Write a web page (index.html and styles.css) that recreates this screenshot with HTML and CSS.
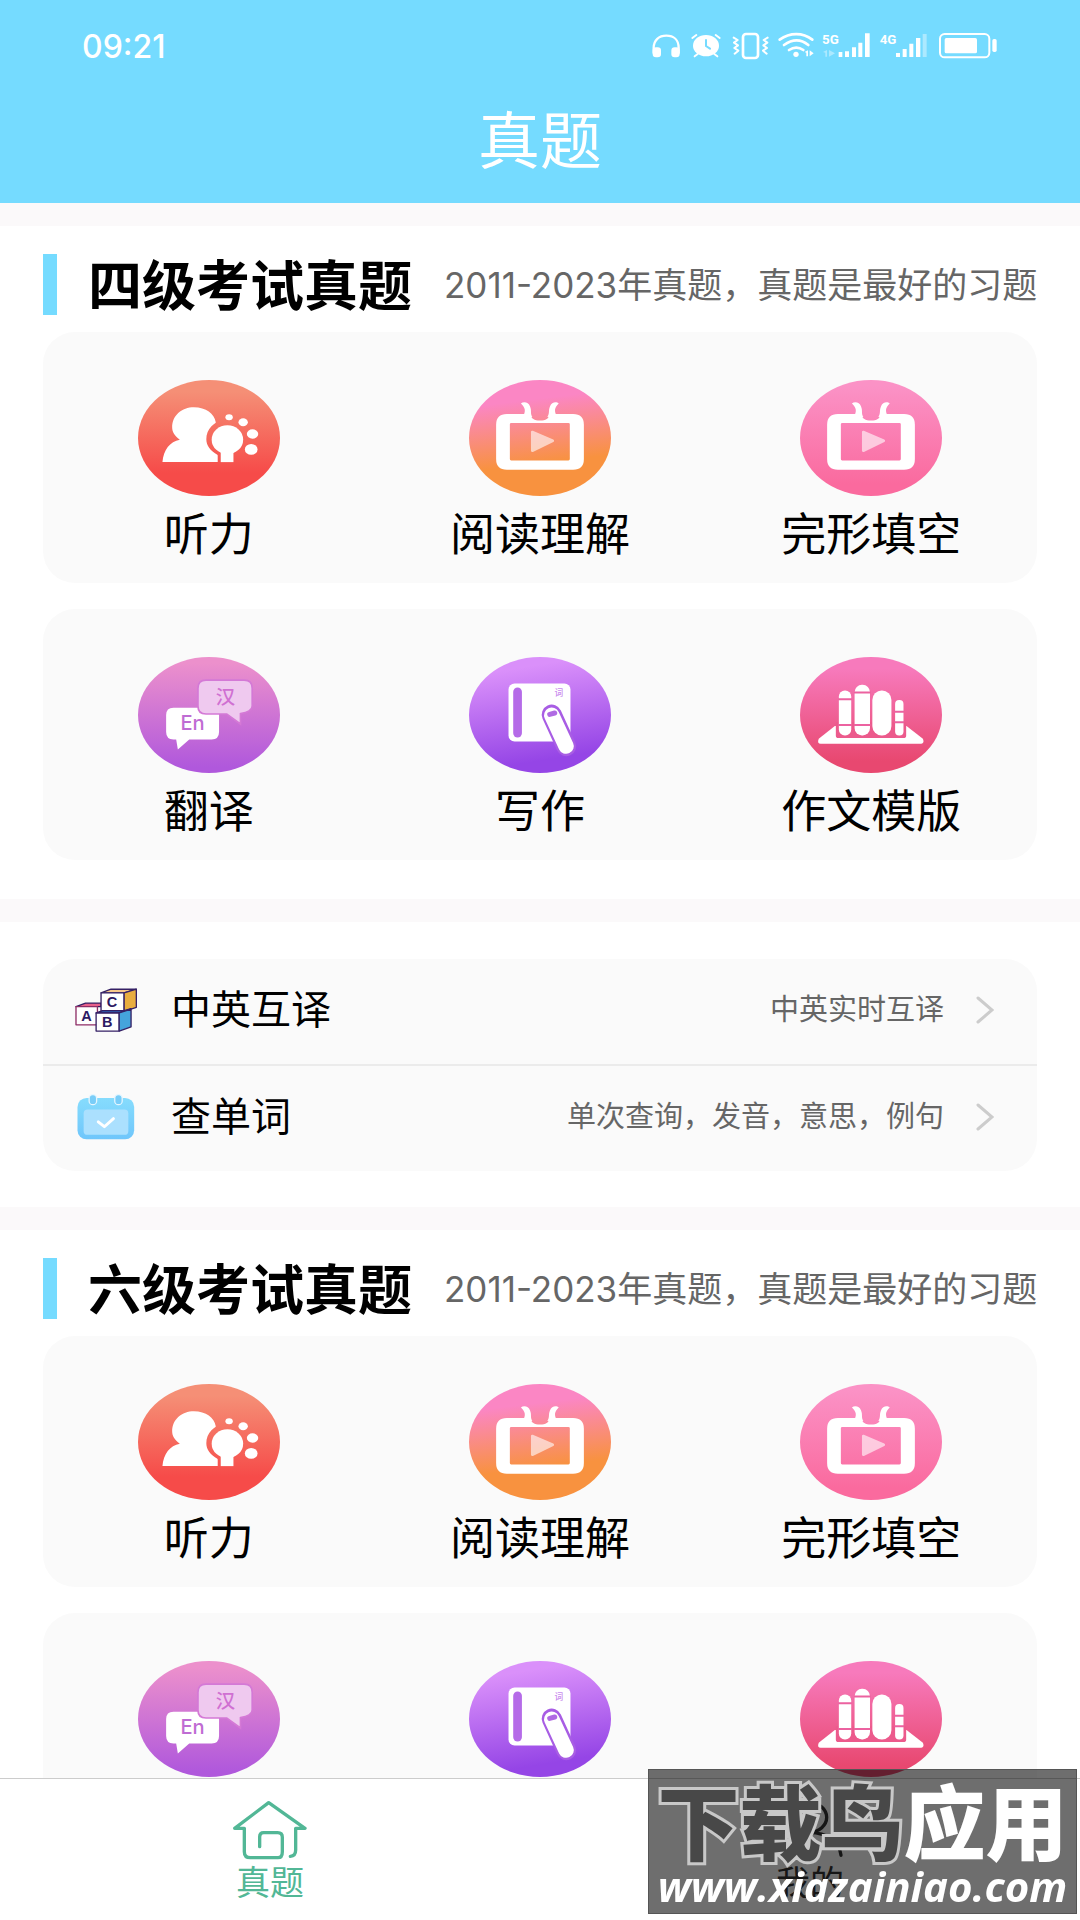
FILE: index.html
```html
<!DOCTYPE html>
<html lang="zh-CN">
<head>
<meta charset="UTF-8">
<meta name="viewport" content="width=device-width, initial-scale=1">
<title>真题</title>
<link rel="stylesheet" href="styles.css">
</head>
<body>
<svg class="sprite" aria-hidden="true">
<defs>
<linearGradient id="g-listen" x1="0" y1="0" x2="0" y2="1"><stop offset="0.1" stop-color="#f58f76"/><stop offset="0.8" stop-color="#f64b49"/></linearGradient>
<linearGradient id="g-read" x1="0.2" y1="0" x2="0.35" y2="1"><stop offset="0.2" stop-color="#fb86c4"/><stop offset="0.75" stop-color="#f8923f"/></linearGradient>
<linearGradient id="g-cloze" x1="0" y1="0" x2="0" y2="1"><stop offset="0.05" stop-color="#fb92c6"/><stop offset="0.9" stop-color="#fa6a9e"/></linearGradient>
<linearGradient id="g-trans" x1="0" y1="0" x2="0" y2="1"><stop offset="0.05" stop-color="#ec90cc"/><stop offset="0.95" stop-color="#b058dc"/></linearGradient>
<linearGradient id="g-write" x1="0.3" y1="0" x2="0.5" y2="1"><stop offset="0.1" stop-color="#da90fa"/><stop offset="0.9" stop-color="#9545e6"/></linearGradient>
<linearGradient id="g-tpl" x1="0" y1="0" x2="0" y2="1"><stop offset="0.1" stop-color="#f77abc"/><stop offset="0.9" stop-color="#e84870"/></linearGradient>
<linearGradient id="g-cal" x1="0" y1="0" x2="0" y2="1"><stop offset="0" stop-color="#86dcfd"/><stop offset="1" stop-color="#6fc6fb"/></linearGradient>
<mask id="m-bulb">
<rect width="424" height="346" fill="#fff"/>
<path fill="#000" d="M267 118C299 118 325 143 325 177C325 200 314 214 300 224V247H238V224C215 210 204 196 204 177C204 143 233 118 267 118Z"/>
</mask>
</defs>
<symbol id="i-listen" viewBox="0 0 424 346">
<ellipse cx="212" cy="173" rx="212" ry="173" fill="url(#g-listen)"/>
<path mask="url(#m-bulb)" fill="#fff" d="M73 245C76 208 95 184 125 178C109 167 102 155 102 141C102 105 131 81 167 81C203 81 228 100 232 125L240 245Z"/>
<ellipse cx="267" cy="178" rx="47" ry="43" fill="#fff"/>
<path fill="#fff" d="M247 210H285V245H247Z"/>
<g fill="#fff"><ellipse cx="272" cy="111" rx="11" ry="9"/><ellipse cx="314" cy="126" rx="14" ry="12"/><ellipse cx="342" cy="161" rx="17" ry="14"/><ellipse cx="338" cy="207" rx="19" ry="16"/></g>
</symbol>
<symbol id="i-tv" viewBox="0 0 424 346">
<path fill="#fff" fill-rule="evenodd" d="M113 101H183C186 115 195 121 212 121C230 121 238 115 241 101H311Q343 101 343 133V236Q343 268 311 268H113Q81 268 81 236V133Q81 101 113 101ZM126 128Q122 128 122 132V236Q122 240 126 240H297Q301 240 301 236V132Q301 128 297 128Z"/>
<path fill="#fff" d="M155 70C163 63 178 66 182 78C188 92 182 98 189 110L162 108C170 92 168 82 155 70Z"/>
<path fill="#fff" d="M268 70C261 63 246 66 242 78C236 92 242 98 234 110L262 108C254 92 255 82 268 70Z"/>
<path fill="#fff" stroke="#fff" stroke-width="8" stroke-linejoin="round" opacity="0.6" d="M189 155L250 181L189 211Z"/>
</symbol>
<symbol id="i-trans" viewBox="0 0 424 346">
<ellipse cx="212" cy="173" rx="212" ry="173" fill="url(#g-trans)"/>
<path fill="#fff" d="M106 151H220Q242 151 242 173V224Q242 246 220 246H153L119 276L114 246H106Q84 246 84 224V173Q84 151 106 151Z"/>
<path fill="#efc9ef" stroke="#d479d6" stroke-width="5" d="M203 69H317Q341 69 341 93V146Q341 163 306 169V200L265 170H203Q179 170 179 146V93Q179 69 203 69Z"/>
<text class="icon-text" x="261" y="140" font-size="58" fill="#d070d2">汉</text>
<text class="icon-text" x="163" y="218" font-size="60" fill="#bf6cd3">En</text>
</symbol>
<symbol id="i-write" viewBox="0 0 424 346">
<ellipse cx="212" cy="173" rx="212" ry="173" fill="url(#g-write)"/>
<rect x="118" y="79" width="185" height="173" rx="18" fill="#fff"/>
<rect x="132" y="91" width="26" height="149" rx="13" fill="#b56be8"/>
<text class="icon-text" x="268" y="115" font-size="26" fill="#c98bee">词</text>
<path d="M247 172L290 266" stroke="#a85de4" stroke-width="60" stroke-linecap="round"/>
<path d="M247 174L290 266" stroke="#fff" stroke-width="46" stroke-linecap="round"/>
<path d="M241 171L256 167" stroke="#b06ae3" stroke-width="15" stroke-linecap="round"/>
</symbol>
<symbol id="i-tpl" viewBox="0 0 424 346">
<ellipse cx="212" cy="173" rx="212" ry="173" fill="url(#g-tpl)"/>
<path fill="#fff" d="M104 206L56 244Q50 259 62 259H362Q372 258 367 244L318 206Z"/>
<path fill="#ec5a8c" d="M107 195H317V234Q317 242 309 242H115Q107 242 107 234Z"/>
<g fill="#fff">
<rect x="116" y="100" width="37" height="134" rx="18"/>
<rect x="163" y="83" width="46" height="151" rx="22"/>
<rect x="216" y="100" width="57" height="134" rx="28"/>
<rect x="284" y="128" width="25" height="106" rx="12"/>
</g>
<path stroke="#ec62a0" stroke-width="6" d="M114 126H155M161 106H211M114 203H155M161 203H211M282 163H311M282 195H311"/>
</symbol>
</svg>

<div class="app">
<header class="header">
<div class="status-bar">
<span class="time">09:21</span>
<svg class="status-icons" viewBox="94 36 1038 84" role="img" aria-label="耳机 闹钟 振动 WLAN 5G 4G 电量">
<g fill="none" stroke="#fff" stroke-linecap="round" stroke-linejoin="round">
<path stroke-width="7" d="M99 98V84C99 60 115 47 137 47S174 60 174 84V98"/>
<path stroke-width="6" d="M339 53l12 7-11 8 12 8-11 8 12 8-11 9M441 53l-12 7 11 8-12 8 11 8-12 8 11 9"/>
<rect x="367" y="42" width="45" height="72" rx="9" stroke-width="8"/>
<path stroke-width="8" d="M477 59C508 37 546 37 575 59M490 75C515 57 541 57 563 75M505 90C520 80 534 80 548 90"/>
<path stroke-width="6" d="M215 54L227 45M297 54L285 45M231 102L222 109M281 102L290 109"/>
<rect x="958" y="42" width="148" height="70" rx="14" stroke-width="6"/>
</g>
<g fill="#fff">
<rect x="96" y="82" width="25" height="30" rx="10"/>
<rect x="152" y="82" width="25" height="30" rx="10"/>
<ellipse cx="256" cy="77" rx="39" ry="32"/>
<circle cx="526" cy="103" r="8"/>
<path d="M552 96l10-5v18h-5V98zM567 91v18l12-9zM654 96h11v15h-11zM673 94h12v17h-12zM694 82h12v29h-12zM713 68h12v43h-12zM733 40h14v71h-14zM826 99h12v12h-12zM846 87h12v24h-12zM866 71h12v40h-12zM886 54h13v57h-13z"/>
<path opacity="0.4" d="M906 42h12v69h-12zM607 96l12-6v20h-5V98zM625 90v20l18-10z"/>
<rect x="972" y="54" width="97" height="46" rx="5"/>
<rect x="1115" y="57" width="13" height="39" rx="5"/>
</g>
<path fill="none" stroke="#75dbff" stroke-width="6" stroke-linecap="round" d="M256 60V78L268 86"/>
<text class="net-text" x="604" y="72">5G</text>
<text class="net-text" x="777" y="72">4G</text>
</svg>
</div>
<h1 class="page-title">真题</h1>
</header>

<main class="content">
<section class="section">
<div class="section-head">
<h2>四级考试真题</h2>
<p>2011-2023年真题，真题是最好的习题</p>
</div>
<div class="card grid">
<a href="#" class="item"><svg class="icon"><use href="#i-listen"/></svg><span>听力</span></a>
<a href="#" class="item"><svg class="icon" viewBox="0 0 424 346"><ellipse cx="212" cy="173" rx="212" ry="173" fill="url(#g-read)"/><use href="#i-tv"/></svg><span>阅读理解</span></a>
<a href="#" class="item"><svg class="icon" viewBox="0 0 424 346"><ellipse cx="212" cy="173" rx="212" ry="173" fill="url(#g-cloze)"/><use href="#i-tv"/></svg><span>完形填空</span></a>
</div>
<div class="card grid">
<a href="#" class="item"><svg class="icon"><use href="#i-trans"/></svg><span>翻译</span></a>
<a href="#" class="item"><svg class="icon"><use href="#i-write"/></svg><span>写作</span></a>
<a href="#" class="item"><svg class="icon"><use href="#i-tpl"/></svg><span>作文模版</span></a>
</div>
</section>

<section class="section tools">
<div class="card list">
<a href="#" class="row">
<svg class="row-icon" viewBox="0 0 188 132">
<g stroke="#352065" stroke-width="4" stroke-linejoin="round">
<path fill="#e8608a" d="M3 56L32 45H79V56Z"/>
<path fill="#fff" stroke="#8e2d66" d="M3 56H68V111H3Z"/>
<path fill="#f7c98c" d="M79 14L109 3H186L149 14Z"/>
<path fill="#fff" d="M79 14H149V70H79Z"/>
<path fill="#e9ad3f" d="M149 14L186 3V58L149 70Z"/>
<path fill="#2e5fb5" d="M64 75L84 68H149L170 62L134 75Z"/>
<path fill="#fff" d="M64 75H134V130H64Z"/>
<path fill="#45a4dc" d="M134 75L170 63V117L134 130Z"/>
</g>
<text class="block-text" x="35" y="100">A</text>
<text class="block-text" x="112" y="58">C</text>
<text class="block-text" x="98" y="118">B</text>
</svg>
<span class="row-title">中英互译</span>
<span class="row-desc">中英实时互译</span>
<svg class="arrow" viewBox="0 0 18 28"><path d="M2 2L16 14L2 26"/></svg>
</a>
<a href="#" class="row">
<svg class="row-icon" viewBox="-6 0 188 142">
<rect x="0" y="12" width="175" height="128" rx="28" fill="url(#g-cal)"/>
<rect x="19" y="48" width="138" height="78" rx="12" fill="#abe0fe"/>
<g fill="#79cdf8" stroke="#e4f6ff" stroke-width="4"><rect x="36" y="2" width="23" height="31" rx="11"/><rect x="115" y="2" width="23" height="31" rx="11"/></g>
<path d="M64 86L83 101L111 76" fill="none" stroke="#fff" stroke-width="9" stroke-linecap="round" stroke-linejoin="round"/>
</svg>
<span class="row-title">查单词</span>
<span class="row-desc">单次查询，发音，意思，例句</span>
<svg class="arrow" viewBox="0 0 18 28"><path d="M2 2L16 14L2 26"/></svg>
</a>
</div>
</section>

<section class="section">
<div class="section-head">
<h2>六级考试真题</h2>
<p>2011-2023年真题，真题是最好的习题</p>
</div>
<div class="card grid">
<a href="#" class="item"><svg class="icon"><use href="#i-listen"/></svg><span>听力</span></a>
<a href="#" class="item"><svg class="icon" viewBox="0 0 424 346"><ellipse cx="212" cy="173" rx="212" ry="173" fill="url(#g-read)"/><use href="#i-tv"/></svg><span>阅读理解</span></a>
<a href="#" class="item"><svg class="icon" viewBox="0 0 424 346"><ellipse cx="212" cy="173" rx="212" ry="173" fill="url(#g-cloze)"/><use href="#i-tv"/></svg><span>完形填空</span></a>
</div>
<div class="card grid">
<a href="#" class="item"><svg class="icon"><use href="#i-trans"/></svg><span>翻译</span></a>
<a href="#" class="item"><svg class="icon"><use href="#i-write"/></svg><span>写作</span></a>
<a href="#" class="item"><svg class="icon"><use href="#i-tpl"/></svg><span>作文模版</span></a>
</div>
</section>
</main>

<nav class="tabs">
<a href="#" class="tab active">
<svg class="tab-icon" viewBox="0 0 222 180"><path d="M34 85H5L107 8L216 85H188V150Q188 168 172 169M34 85V155Q34 173 52 173H135Q148 173 148 155V112Q148 98 134 98H92Q80 98 80 110V140"/></svg>
<span>真题</span>
</a>
<a href="#" class="tab">
<svg class="tab-icon" viewBox="0 0 222 180"><ellipse cx="111" cy="52" rx="50" ry="44"/><path d="M18 166C24 122 62 98 111 98S198 122 204 166"/></svg>
<span>我的</span>
</a>
</nav>
</div>

<div class="watermark">
<div class="mark-name"><span class="mark-dark">下载鸟</span>应用</div>
<div class="mark-url">www.xiazainiao.com</div>
</div>
</body>
</html>
```

FILE: styles.css
```css
* {
box-sizing: border-box;
}
body {
margin: 0;
background: #fff;
color: #000;
font-family: Inter, "Noto Sans CJK SC", sans-serif;
}
a {
color: inherit;
text-decoration: none;
}
h1, h2, p {
margin: 0;
}
svg {
display: block;
}
.sprite {
position: absolute;
width: 0;
height: 0;
}
.app {
display: flex;
flex-direction: column;
height: 100vh;
}

/* header */
.header {
flex: none;
background: #75dbff;
color: #fff;
padding: 28px 82px 16px;
}
.status-bar {
display: flex;
justify-content: space-between;
align-items: center;
height: 36px;
}
.time {
font-size: 32px;
font-weight: 500;
}
.status-icons {
width: 346px;
height: 28px;
}
.net-text {
font-family: Roboto, sans-serif;
font-weight: 700;
font-size: 40px;
fill: #fff;
}
.page-title {
margin-top: 32px;
font-size: 62px;
line-height: 91px;
font-weight: 400;
text-align: center;
}

/* sections */
.content {
flex: 1;
min-height: 0;
overflow-y: auto;
scrollbar-width: none;
}
.section {
border-top: 23px solid #fbf9fa;
padding: 28px 43px 39px;
}
.section-head {
display: flex;
align-items: center;
height: 61px;
margin: 0 -20px 17px 0;
padding-left: 31px;
border-left: 14px solid #75dbff;
white-space: nowrap;
}
.section-head h2 {
font-size: 54px;
line-height: 60px;
padding-top: 4px;
}
.section-head p {
margin-left: 32px;
font-size: 35px;
line-height: 60px;
color: #666;
}
.card {
background: #fafafa;
border-radius: 32px;
}
.grid {
display: grid;
grid-template-columns: repeat(3, 1fr);
padding: 48px 0 18px;
}
.grid + .grid {
margin-top: 26px;
}
.item {
display: flex;
flex-direction: column;
align-items: center;
gap: 8px;
font-size: 45px;
line-height: 61px;
}
.icon {
width: 142px;
height: 116px;
}
.icon-text {
font-family: Inter, "Noto Sans CJK SC", sans-serif;
font-weight: 500;
text-anchor: middle;
}

/* tool list */
.tools {
padding: 37px 43px 36px;
}
.row {
display: flex;
align-items: center;
height: 105px;
padding: 0 43px 4px 32px;
}
.row + .row {
height: 107px;
border-top: 2px solid #ebebeb;
}
.row-icon {
width: 62px;
height: 46px;
}
.block-text {
font-family: "Liberation Sans", sans-serif;
font-weight: 700;
font-size: 44px;
fill: #2d1a63;
text-anchor: middle;
}
.row-title {
margin-left: 34px;
font-size: 40px;
line-height: 56px;
}
.row-desc {
margin-left: auto;
font-size: 29px;
line-height: 56px;
color: #666;
}
.arrow {
width: 18px;
height: 28px;
margin-left: 32px;
fill: none;
stroke: #ccc;
stroke-width: 3;
stroke-linecap: round;
}

/* bottom tabs */
.tabs {
flex: none;
display: flex;
height: 142px;
border-top: 1px solid #ccc;
background: #fff;
}
.tab {
flex: 1;
display: flex;
flex-direction: column;
align-items: center;
padding-top: 21px;
font-size: 34px;
line-height: 45px;
color: #333;
}
.tab.active {
color: #52b796;
}
.tab-icon {
width: 74px;
height: 60px;
fill: none;
stroke: currentColor;
stroke-width: 10;
stroke-linecap: round;
stroke-linejoin: round;
}

/* site mark over the bottom corner */
.watermark {
position: fixed;
right: 3px;
bottom: 6px;
width: 429px;
height: 145px;
padding-top: 14px;
background: rgba(0, 0, 0, 0.57);
border: 1px solid #555;
color: #fff;
text-align: center;
white-space: nowrap;
}
.mark-name {
font-size: 82px;
line-height: 82px;
font-weight: 900;
}
.mark-dark {
color: #484848;
-webkit-text-stroke: 6px #c8c8c8;
paint-order: stroke fill;
}
.mark-url {
font-family: "Open Sans", sans-serif;
font-size: 42px;
line-height: 40px;
font-weight: 700;
font-style: italic;
}
```
